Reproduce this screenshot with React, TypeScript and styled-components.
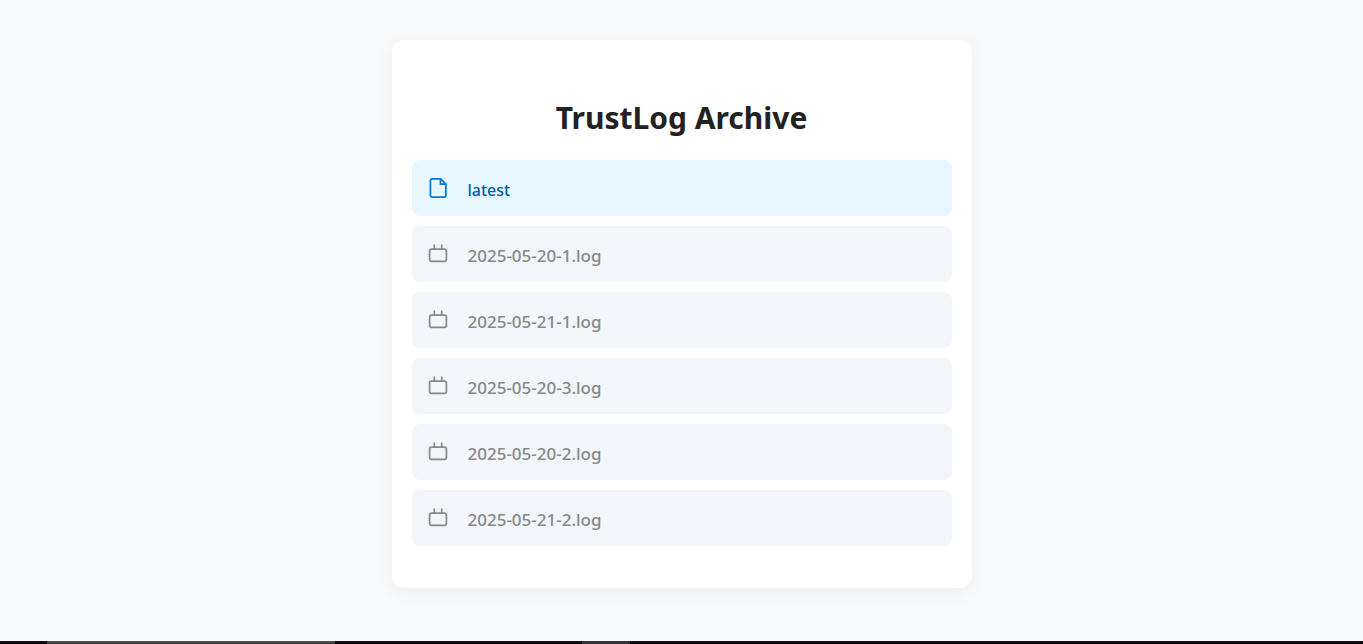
import React from 'react';
import styled, { createGlobalStyle } from 'styled-components';

const GlobalStyle = createGlobalStyle`
  * { box-sizing: border-box; }
  body {
    margin: 0;
    background: #f8f9fb;
    font-family: 'Segoe UI', 'Noto Sans', 'Open Sans', sans-serif;
    color: #222;
  }
`;

const Page = styled.div`
  display: flex;
  flex-direction: column;
  min-height: 100vh;
`;

const Main = styled.main`
  flex: 1;
  padding: 40px 20px;
`;

const Card = styled.section`
  max-width: 580px;
  margin: 0 auto;
  padding: 56px 20px 42px;
  background: #fff;
  border-radius: 12px;
  box-shadow: 0 4px 20px rgba(0, 0, 0, 0.05);
`;

const Title = styled.h1`
  margin: 0 0 20px;
  font-size: 30px;
  line-height: 44px;
  font-weight: 700;
  text-align: center;
`;

const LogList = styled.ul`
  display: flex;
  flex-direction: column;
  gap: 10px;
  margin: 0;
  padding: 0;
  list-style: none;
`;

const LogLink = styled.a<{ $latest?: boolean }>`
  display: flex;
  align-items: center;
  gap: 20px;
  height: 56px;
  padding: 0 16px;
  border-radius: 8px;
  background: ${(p) => (p.$latest ? '#e6f7ff' : '#f2f5fa')};
  color: ${(p) => (p.$latest ? '#005fa3' : '#888')};
  font-size: ${(p) => (p.$latest ? 16 : 17)}px;
  line-height: 24px;
  font-weight: 500;
  text-decoration: none;
`;

const Icon = styled.svg`
  flex: none;
  width: 20px;
  height: 20px;
  fill: none;
  stroke-width: 1.7;
  stroke-linecap: round;
  stroke-linejoin: round;
`;

const Label = styled.span`
  padding-top: 3px;
`;

const Taskbar = styled.footer`
  display: flex;
  height: 3px;
  background: linear-gradient(#151417, #060306);
`;

const TaskItem = styled.div<{ $start: number; $width: number; $color: string }>`
  margin-left: ${(p) => p.$start}px;
  width: ${(p) => p.$width}px;
  background: ${(p) => p.$color};
`;

const FileIcon = () => (
  <Icon viewBox="0 0 20 20" stroke="#0078d4" aria-hidden="true">
    <path d="M4.2 0.9H12.6L17.9 6.2V17.3a1.8 1.8 0 0 1-1.8 1.8H4.2a1.8 1.8 0 0 1-1.8-1.8V2.7A1.8 1.8 0 0 1 4.2.9Z" />
    <path d="M12.5 1v5.2h5.2" />
  </Icon>
);

const CalendarIcon = () => (
  <Icon viewBox="0 0 20 20" stroke="#888" aria-hidden="true">
    <rect x="1.6" y="5.2" width="16.8" height="12.2" rx="1.8" />
    <path d="M6.3 1.2v4M13.7 1.2v4" />
  </Icon>
);

const logs = [
  '2025-05-20-1.log',
  '2025-05-21-1.log',
  '2025-05-20-3.log',
  '2025-05-20-2.log',
  '2025-05-21-2.log',
];

export default function App() {
  return (
    <Page>
      <GlobalStyle />
      <Main>
        <Card>
          <Title>TrustLog Archive</Title>
          <LogList>
            <li>
              <LogLink href="#latest" $latest>
                <FileIcon />
                <Label>latest</Label>
              </LogLink>
            </li>
            {logs.map((name) => (
              <li key={name}>
                <LogLink href={`#${name}`}>
                  <CalendarIcon />
                  <Label>{name}</Label>
                </LogLink>
              </li>
            ))}
          </LogList>
        </Card>
      </Main>
      <Taskbar>
        <TaskItem $start={47} $width={288} $color="linear-gradient(#666, #444 1px, #3d3d3d)" />
        <TaskItem $start={247} $width={48} $color="#353436" />
      </Taskbar>
    </Page>
  );
}
